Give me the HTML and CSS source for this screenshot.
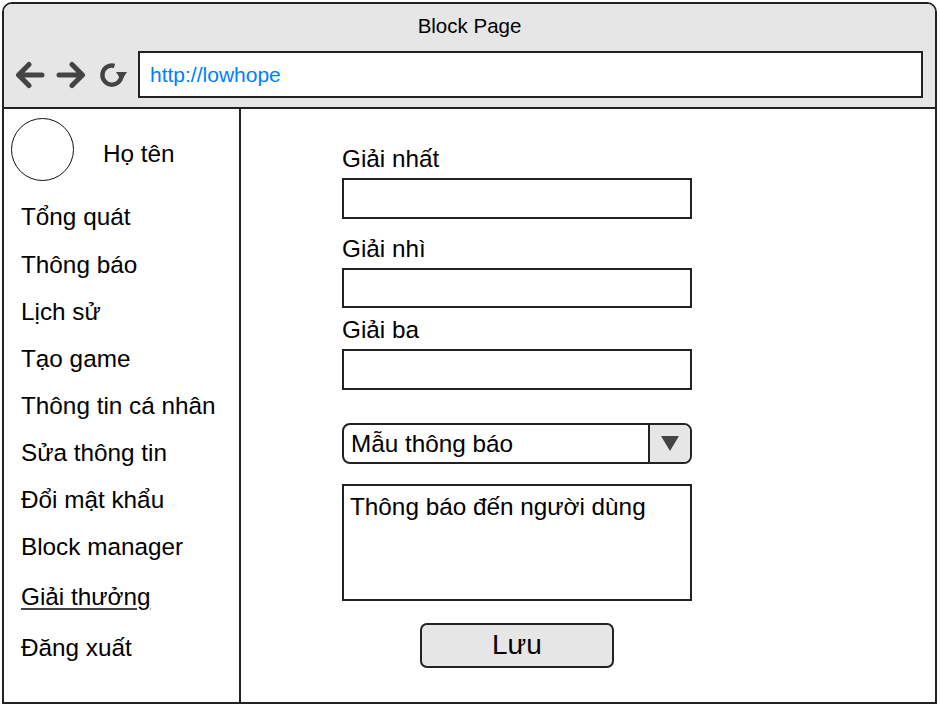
FILE: index.html
```html
<!DOCTYPE html>
<html lang="vi">
<head>
<meta charset="utf-8">
<title>Block Page</title>
<link rel="stylesheet" href="styles.css">
</head>
<body>
<div class="window">
  <header class="chrome">
    <div class="title">Block Page</div>
    <div class="navbar">
      <svg class="nav-icon" viewBox="0 0 30 30" width="30" height="30" aria-hidden="true">
        <path d="M27 15 H5 M14 4.5 L3.5 15 L14 25.5" fill="none" stroke="#444" stroke-width="5" stroke-linecap="round" stroke-linejoin="round"/>
      </svg>
      <svg class="nav-icon" viewBox="0 0 30 30" width="30" height="30" aria-hidden="true">
        <path d="M3 15 H25 M16 4.5 L26.5 15 L16 25.5" fill="none" stroke="#444" stroke-width="5" stroke-linecap="round" stroke-linejoin="round"/>
      </svg>
      <svg class="nav-icon" viewBox="0 0 30 30" width="30" height="30" aria-hidden="true">
        <path d="M17.5 5.8 A9.6 9.6 0 1 0 24.6 15.5" fill="none" stroke="#444" stroke-width="4.4"/>
        <polygon points="19,12 30,12 24.5,20.5" fill="#444"/>
      </svg>
      <div class="url">http://lowhope</div>
    </div>
  </header>
  <div class="content">
    <aside class="sidebar">
      <div class="profile">
        <div class="avatar"></div>
        <div class="name">Họ tên</div>
      </div>
      <ul class="menu">
        <li>Tổng quát</li>
        <li>Thông báo</li>
        <li>Lịch sử</li>
        <li>Tạo game</li>
        <li>Thông tin cá nhân</li>
        <li>Sửa thông tin</li>
        <li>Đổi mật khẩu</li>
        <li>Block manager</li>
        <li class="active"><span>Giải thưởng</span></li>
        <li class="logout">Đăng xuất</li>
      </ul>
    </aside>
    <main class="main">
      <form class="form">
        <div class="field">
          <label class="label">Giải nhất</label>
          <div class="input"></div>
        </div>
        <div class="field field-2">
          <label class="label">Giải nhì</label>
          <div class="input"></div>
        </div>
        <div class="field field-3">
          <label class="label">Giải ba</label>
          <div class="input"></div>
        </div>
        <div class="select">
          <span class="select-text">Mẫu thông báo</span>
          <span class="select-btn"><span class="tri"></span></span>
        </div>
        <div class="textarea">Thông báo đến người dùng</div>
        <div class="actions">
          <div class="btn">Lưu</div>
        </div>
      </form>
    </main>
  </div>
</div>
</body>
</html>
```
FILE: styles.css
```css
* { box-sizing: border-box; }

html, body {
  margin: 0;
  padding: 0;
  background: #fff;
}

body {
  font-family: "Liberation Sans", Arial, sans-serif;
  color: #000;
}

.window {
  margin: 2px 0 0 2px;
  width: 935px;
  height: 702px;
  border: 2px solid #222;
  border-radius: 10px 10px 0 0;
  overflow: hidden;
  display: flex;
  flex-direction: column;
}

.chrome {
  background: #e6e6e6;
  border-bottom: 2px solid #222;
  padding-bottom: 9px;
}

.title {
  height: 44px;
  line-height: 44px;
  font-size: 20.5px;
  text-align: center;
}

.navbar {
  margin-top: 3px;
  height: 47px;
  display: flex;
  align-items: center;
  padding: 0 12px 0 11px;
}

.nav-icon {
  display: block;
  flex: none;
  margin-right: 11px;
  margin-top: 1px;
}

.url {
  flex: 1;
  height: 47px;
  border: 2px solid #222;
  background: #fff;
  color: #007fff;
  font-size: 21px;
  line-height: 43px;
  padding-left: 10px;
}

.content {
  flex: 1;
  display: flex;
  min-height: 0;
}

.sidebar {
  width: 237px;
  flex: none;
  border-right: 2px solid #222;
  padding: 9px 0 0 7px;
}

.profile {
  display: flex;
  align-items: flex-start;
}

.avatar {
  width: 63px;
  height: 63px;
  border: 1.5px solid #111;
  border-radius: 50%;
}

.name {
  margin: 21px 0 0 29px;
  font-size: 24.3px;
  line-height: 30px;
}

.menu {
  list-style: none;
  margin: 12px 0 0 0;
  padding: 0 0 0 10px;
  font-size: 24.3px;
  line-height: 47px;
}

.menu li:nth-child(2) { margin-top: 1px; }

.menu .active {
  margin-top: 3px;
}

.menu .active span {
  text-decoration: underline;
  text-decoration-thickness: 2px;
  text-underline-offset: 3px;
  text-decoration-color: #444;
}

.menu .logout {
  margin-top: 4px;
}

.main {
  flex: 1;
  padding: 35px 0 0 101px;
}

.form {
  width: 350px;
  display: flex;
  flex-direction: column;
  font-size: 24.3px;
}

.label {
  display: block;
  line-height: 30px;
}

.input {
  margin-top: 4px;
  height: 41px;
  border: 2px solid #222;
  background: #fff;
}

.field-2 { margin-top: 15px; }
.field-2 .input { height: 40px; }
.field-3 { margin-top: 7px; }

.select {
  margin-top: 33px;
  height: 41px;
  border: 2px solid #222;
  border-radius: 8px;
  display: flex;
  overflow: hidden;
}

.select-text {
  flex: 1;
  line-height: 37px;
  padding-left: 7px;
}

.select-btn {
  width: 42px;
  flex: none;
  background: #e6e6e6;
  border-left: 2px solid #222;
  display: flex;
  align-items: center;
  justify-content: center;
}

.tri {
  width: 0;
  height: 0;
  border-left: 9px solid transparent;
  border-right: 9px solid transparent;
  border-top: 15px solid #444;
}

.textarea {
  margin-top: 20px;
  height: 117px;
  border: 2px solid #222;
  padding: 6px 0 0 6px;
  line-height: 30px;
}

.actions {
  margin-top: 22px;
  display: flex;
  justify-content: center;
}

.btn {
  width: 194px;
  height: 45px;
  border: 2px solid #222;
  border-radius: 7px;
  background: #e6e6e6;
  font-size: 28px;
  line-height: 39px;
  text-align: center;
}
```
